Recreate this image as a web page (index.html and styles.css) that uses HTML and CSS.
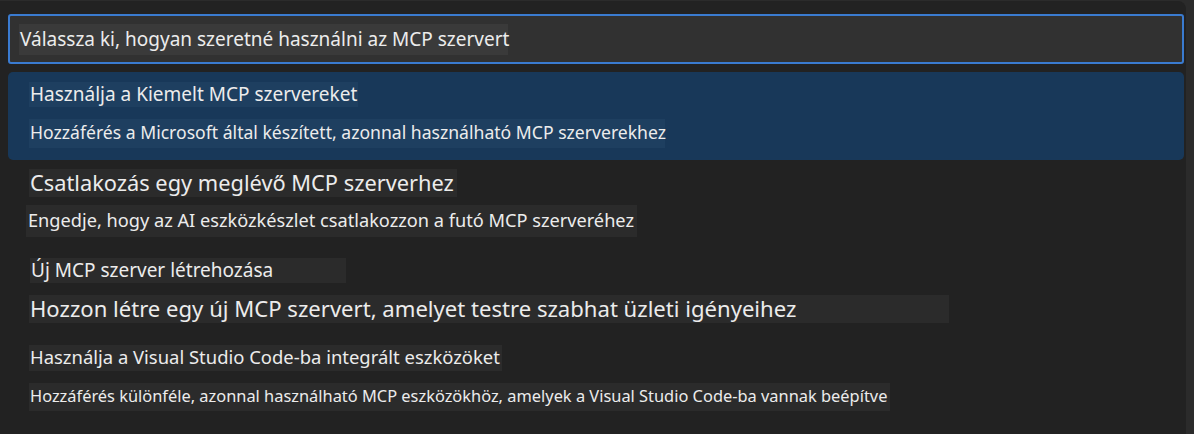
FILE: index.html
```html
<!DOCTYPE html>
<html lang="hu">
<head>
<meta charset="utf-8">
<title>MCP</title>
<link rel="stylesheet" href="styles.css">
</head>
<body>
<div class="panel">
  <div class="input">
    <span class="hl hl-input">Válassza ki, hogyan szeretné használni az MCP szervert</span>
  </div>
  <div class="list">
    <div class="item selected">
      <div class="line l1t"><span class="hl">Használja a Kiemelt MCP szervereket</span></div>
      <div class="line l1d"><span class="hl">Hozzáférés a Microsoft által készített, azonnal használható MCP szerverekhez</span></div>
    </div>
    <div class="item">
      <div class="line l2t"><span class="hl">Csatlakozás egy meglévő MCP szerverhez</span></div>
      <div class="line l2d"><span class="hl">Engedje, hogy az AI eszközkészlet csatlakozzon a futó MCP szerveréhez</span></div>
    </div>
    <div class="item">
      <div class="line l3t"><span class="hl">Új MCP szerver létrehozása</span></div>
      <div class="line l3d"><span class="hl">Hozzon létre egy új MCP szervert, amelyet testre szabhat üzleti igényeihez</span></div>
    </div>
    <div class="item">
      <div class="line l4t"><span class="hl">Használja a Visual Studio Code-ba integrált eszközöket</span></div>
      <div class="line l4d"><span class="hl">Hozzáférés különféle, azonnal használható MCP eszközökhöz, amelyek a Visual Studio Code-ba vannak beépítve</span></div>
    </div>
  </div>
</div>
</body>
</html>
```
FILE: styles.css
```css
html, body {
  margin: 0;
  padding: 0;
  background: #2b2b2b;
  height: 100%;
}
body {
  font-family: "Noto Sans", "Open Sans", sans-serif;
  color: #ececec;
  overflow: hidden;
}
.panel {
  margin-top: 1px;
  width: 1186px;
  height: 433px;
  background: #222222;
  border-top-right-radius: 8px;
  box-sizing: border-box;
  padding: 13px 2px 0 8px;
}
.input {
  height: 50px;
  box-sizing: border-box;
  border: 2px solid #3a7bd0;
  border-radius: 3px;
  background: #313131;
  padding: 8px 0 0 9px;
}
.hl {
  display: inline-flex;
  align-items: center;
  box-sizing: border-box;
  white-space: nowrap;
  background: #2b2b2b;
  line-height: 1;
  padding: 0 0 1px 1px;
}
.hl-input {
  background: #3a3a3a;
  font-size: 19px;
  height: 31px;
  width: 489px;
}
.list {
  margin-top: 8px;
}
.item {
  padding-left: 21px;
}
.item.selected {
  background: #183859;
  border-radius: 5px;
  height: 88px;
  box-sizing: border-box;
  padding-top: 10px;
}
.item.selected .hl {
  background: #1e3f60;
}
.line { display: flex; }
.l1t .hl { height: 25px; width: 329px; font-size: 19px; }
.l1d { margin-top: 12px; }
.l1d .hl { height: 29px; width: 636px; font-size: 17.6px; }
.l2t { margin-top: 9px; }
.l2t .hl { height: 28px; width: 428px; font-size: 21.8px; }
.l2d { margin-top: 8px; margin-left: -3px; }
.l2d .hl { height: 32px; width: 611px; font-size: 18.2px; padding-left: 2px; }
.l3t { margin-top: 21px; margin-left: 1px; }
.l3t .hl { height: 25px; width: 316px; font-size: 19px; }
.l3d { margin-top: 12px; }
.l3d .hl { height: 28px; width: 920px; font-size: 22.1px; }
.l4t { margin-top: 22px; }
.l4t .hl { height: 26px; width: 473px; font-size: 18.45px; }
.l4d { margin-top: 12px; }
.l4d .hl { height: 28px; width: 861px; font-size: 16.4px; }
```
